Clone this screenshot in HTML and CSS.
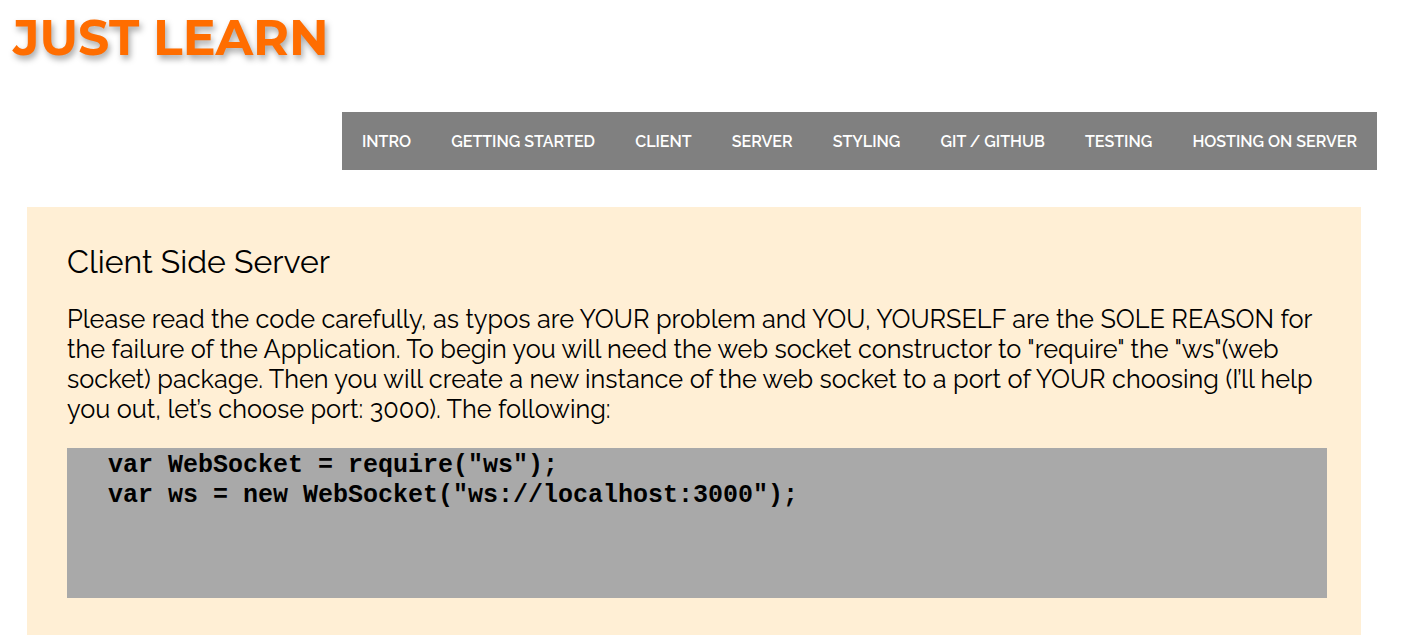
FILE: index.html
```html
<!DOCTYPE html>
<html lang="en">
<head>
<meta charset="utf-8">
<title>Just Learn</title>
<link rel="stylesheet" href="styles.css">
</head>
<body>
<header class="site-header">
  <h1 class="logo">JUST LEARN</h1>
  <nav class="main-nav">
    <a href="#" class="nav-link">INTRO</a>
    <a href="#" class="nav-link">GETTING STARTED</a>
    <a href="#" class="nav-link">CLIENT</a>
    <a href="#" class="nav-link">SERVER</a>
    <a href="#" class="nav-link">STYLING</a>
    <a href="#" class="nav-link">GIT / GITHUB</a>
    <a href="#" class="nav-link">TESTING</a>
    <a href="#" class="nav-link">HOSTING ON SERVER</a>
  </nav>
</header>
<main class="content">
  <h2 class="section-title">Client Side Server</h2>
  <p class="intro-text">Please read the code carefully, as typos are YOUR problem and YOU, YOURSELF are the SOLE REASON for the failure of the Application. To begin you will need the web socket constructor to "require" the "ws"(web socket) package. Then you will create a new instance of the web socket to a port of YOUR choosing (I’ll help you out, let’s choose port: 3000). The following:</p>
  <pre class="code-block">  var WebSocket = require("ws");
  var ws = new WebSocket("ws://localhost:3000");</pre>
</main>
</body>
</html>
```

FILE: styles.css
```css
html, body {
  margin: 0;
  padding: 0;
  background: #ffffff;
}

body {
  font-family: "Raleway", "Open Sans", sans-serif;
  color: #000;
}

.site-header {
  display: flex;
  flex-direction: column;
}

.logo {
  margin: 9px 0 0 13px;
  font-family: "Montserrat", "Lato", sans-serif;
  font-weight: 700;
  font-size: 49px;
  line-height: 57px;
  color: #ff6d00;
  text-shadow: 2px 4px 6px rgba(0, 0, 0, 0.35);
}

.main-nav {
  align-self: flex-end;
  margin: 46px 30px 0 0;
  width: 1035px;
  height: 58px;
  background: #808080;
  display: flex;
  justify-content: space-between;
  align-items: center;
}

.nav-link {
  padding: 0 20px;
  color: #ffffff;
  text-decoration: none;
  font-size: 16px;
  font-weight: 600;
}

.content {
  margin: 37px 46px 0 27px;
  padding: 35px 34px 40px 40px;
  background: #ffefd5;
}

.section-title {
  margin: 0 0 22px;
  font-size: 32px;
  font-weight: 400;
  line-height: 40px;
}

.intro-text {
  margin: 0 0 24px;
  font-size: 25.3px;
  line-height: 30px;
}

.code-block {
  margin: 0;
  height: 150px;
  box-sizing: border-box;
  padding: 3px 11px 0;
  background: #a9a9a9;
  font-family: "Liberation Mono", "Courier New", monospace;
  font-weight: 700;
  font-size: 25px;
  line-height: 30px;
  color: #000;
}
```
